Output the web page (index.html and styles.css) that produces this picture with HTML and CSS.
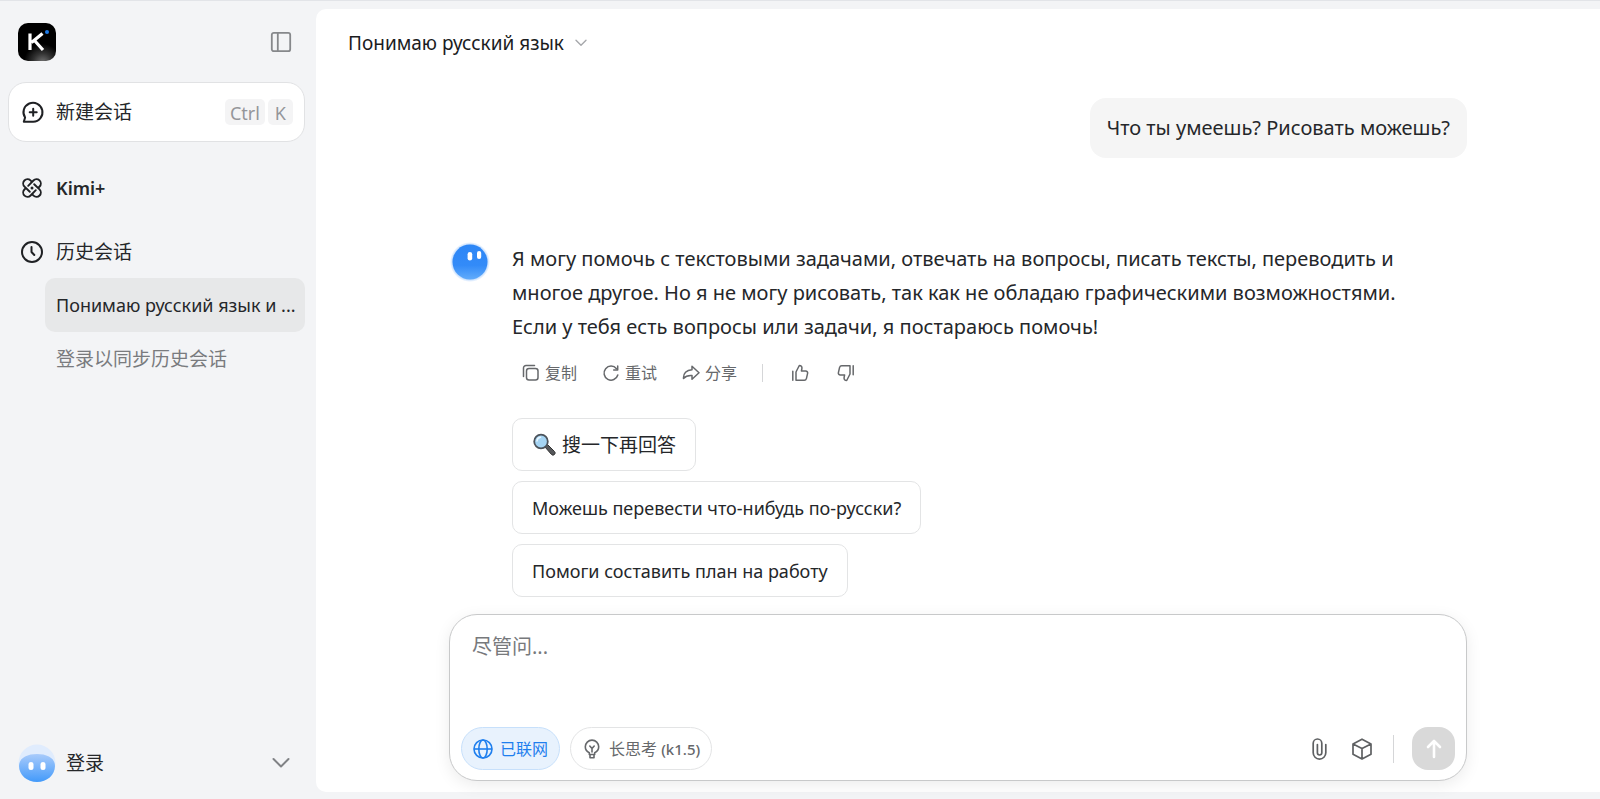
FILE: index.html
```html
<!DOCTYPE html>
<html lang="zh-CN">
<head>
    <meta charset="UTF-8">
    <meta name="viewport" content="width=device-width, initial-scale=1.0">
    <title>Kimi</title>
    <link rel="stylesheet" href="styles.css">
</head>
<body>
    <aside class="sidebar">
        <div class="sidebar-top">
            <a href="#" class="logo" aria-label="Kimi">
                <svg width="38" height="38" viewBox="0 0 38 38">
                    <defs>
                        <radialGradient id="logo-glow" cx="0.65" cy="1.05" r="0.5">
                            <stop offset="0" stop-color="#777"/>
                            <stop offset="0.5" stop-color="#333"/>
                            <stop offset="1" stop-color="#000"/>
                        </radialGradient>
                    </defs>
                    <rect width="38" height="38" rx="10" fill="url(#logo-glow)"/>
                    <path d="M12 10.500v16.500M24.500 10.500L13.500 19.500M16.500 17.500L25 27" fill="none" stroke="#fff" stroke-width="3.200"/>
                    <circle cx="29" cy="9" r="2" fill="#1c7ae8"/>
                </svg>
            </a>
            <button class="icon-button" aria-label="收起侧边栏">
                <svg width="22" height="22" viewBox="0 0 22 22" fill="none" stroke="#86888b" stroke-width="1.800">
                    <rect x="1.800" y="1.800" width="18.400" height="18.400" rx="2"/>
                    <path d="M7.800 2v18"/>
                </svg>
            </button>
        </div>

        <button class="new-chat">
            <svg width="24" height="24" viewBox="0 0 24 24" fill="none" stroke="#1f2124" stroke-width="2" stroke-linecap="round" stroke-linejoin="round">
                <path d="M12.200 21.700H2.800l1.300-4.200A9.500 9.500 0 1 1 12.200 21.700z"/>
                <path d="M12.200 8.700v7M8.700 12.200h7"/>
            </svg>
            <span class="label">新建会话</span>
            <kbd>Ctrl</kbd>
            <kbd>K</kbd>
        </button>

        <nav class="menu">
            <a href="#" class="menu-item kimi-plus">
                <svg width="24" height="24" viewBox="0 0 24 24" fill="none" stroke="#1f2124" stroke-width="1.900" stroke-linecap="round">
                    <path id="loop" d="M8.200 9.800l5.200-5.300a4.300 4.300 0 0 1 6.200 6l-1.200 1.200"/>
                    <use href="#loop" transform="rotate(90 12 12)"/>
                    <use href="#loop" transform="rotate(180 12 12)"/>
                    <use href="#loop" transform="rotate(270 12 12)"/>
                    <circle cx="12" cy="12" r="1.500" fill="#1f2124" stroke="none"/>
                </svg>
                <span>Kimi+</span>
            </a>
            <a href="#" class="menu-item">
                <svg width="24" height="24" viewBox="0 0 24 24" fill="none" stroke="#1f2124" stroke-width="2" stroke-linecap="round" stroke-linejoin="round">
                    <circle cx="12" cy="12" r="10"/>
                    <path d="M11.500 7v5l2.800 3"/>
                </svg>
                <span class="large">历史会话</span>
            </a>
            <a href="#" class="history-item">Понимаю русский язык и ...</a>
            <a href="#" class="sync-hint large">登录以同步历史会话</a>
        </nav>

        <button class="login">
            <svg width="38" height="38" viewBox="0 0 38 38">
                <defs>
                    <linearGradient id="login-face" x1="0" y1="0" x2="0" y2="1">
                        <stop offset="0" stop-color="#a9cbfb"/>
                        <stop offset="1" stop-color="#439afa"/>
                    </linearGradient>
                </defs>
                <circle cx="19" cy="19" r="18.500" fill="#e0ecfd"/>
                <path d="M1 22C1 14 9 10 19 10s18 4 18 12c0 9-8 16-18 16S1 31 1 22z" fill="url(#login-face)"/>
                <rect x="10.500" y="18" width="5" height="8" rx="2.500" fill="#fff"/>
                <rect x="22.500" y="18" width="5" height="8" rx="2.500" fill="#fff"/>
            </svg>
            <span class="label">登录</span>
            <svg width="18" height="12" viewBox="0 0 18 12" fill="none" stroke="#808285" stroke-width="2" stroke-linecap="round" stroke-linejoin="round">
                <path d="M1.500 2L9 9.500L16.500 2"/>
            </svg>
        </button>
    </aside>

    <main class="chat">
        <header class="chat-header">
            <button class="chat-title">
                <span>Понимаю русский язык</span>
                <svg width="12" height="8" viewBox="0 0 12 8" fill="none" stroke="#a6a8ab" stroke-width="1.400" stroke-linecap="round" stroke-linejoin="round">
                    <path d="M1 1.200l5 5l5-5"/>
                </svg>
            </button>
        </header>

        <div class="column">
            <div class="messages">
                <p class="user-message">Что ты умеешь? Рисовать можешь?</p>

                <div class="reply">
                    <svg class="avatar" width="40" height="40" viewBox="0 0 40 40">
                        <defs>
                            <linearGradient id="face" x1="0" y1="0" x2="0" y2="1">
                                <stop offset="0" stop-color="#2c86f6"/>
                                <stop offset="0.6" stop-color="#338bf8"/>
                                <stop offset="1" stop-color="#62acfb"/>
                            </linearGradient>
                            <radialGradient id="halo">
                                <stop offset="0.85" stop-color="#b5d5fd"/>
                                <stop offset="1" stop-color="#fff"/>
                            </radialGradient>
                        </defs>
                        <circle cx="20" cy="20" r="20" fill="url(#halo)"/>
                        <circle cx="20" cy="20" r="17.500" fill="url(#face)"/>
                        <rect x="17.600" y="10" width="4.600" height="8.600" rx="2.300" fill="#fff"/>
                        <rect x="27" y="9" width="4.200" height="8" rx="2.100" fill="#fff"/>
                    </svg>
                    <div class="reply-body">
                        <p class="reply-text">Я могу помочь с текстовыми задачами, отвечать на вопросы, писать тексты, переводить и многое другое. Но я не могу рисовать, так как не обладаю графическими возможностями. Если у тебя есть вопросы или задачи, я постараюсь помочь!</p>

                        <div class="actions">
                            <button>
                                <svg width="18" height="18" viewBox="0 0 18 18">
                                    <rect x="4.500" y="4.500" width="11.500" height="11.500" rx="2.500"/>
                                    <path d="M1.500 12.500V4a2.500 2.500 0 0 1 2.500-2.500h8.500"/>
                                </svg>
                                复制
                            </button>
                            <button>
                                <svg width="18" height="18" viewBox="0 0 18 18">
                                    <path d="M15.800 11a7 7 0 1 1-1.300-6.300"/>
                                    <path d="M15.700 2v4h-4"/>
                                </svg>
                                重试
                            </button>
                            <button>
                                <svg width="18" height="18" viewBox="0 0 18 18">
                                    <path d="M10 2.200l7 6.500l-7 6.500v-3.700c-3.800-.3-6.500.7-8.500 3c-.4-5 3-8.500 8.500-8.800z"/>
                                </svg>
                                分享
                            </button>
                            <span class="divider"></span>
                            <button class="thumb" aria-label="赞">
                                <svg width="18" height="18" viewBox="0 0 18 18">
                                    <path d="M1.800 7.200v9M5 8l3.300-6.500c1.800 0 2.900 1.200 2.600 3l-.5 2.500h4.300c1.300 0 2.200 1.200 1.900 2.400l-1.200 5.200c-.3 1-1.100 1.700-2.100 1.700H5z"/>
                                </svg>
                            </button>
                            <button class="thumb" aria-label="踩">
                                <svg width="18" height="18" viewBox="0 0 18 18">
                                    <path d="M16.200 10.800v-9M13 10l-3.300 6.500c-1.800 0-2.900-1.200-2.600-3l.5-2.500H3.300c-1.300 0-2.200-1.200-1.900-2.400l1.200-5.200c.3-1 1.100-1.700 2.100-1.700H13z"/>
                                </svg>
                            </button>
                        </div>

                        <div class="suggestions">
                            <button class="large">
                                <svg width="24" height="24" viewBox="0 0 24 24">
                                    <path d="M13 14l2.500-2.500l7 7a1.800 1.800 0 0 1-3 3z" fill="#55575a" stroke="#333" stroke-width="1"/>
                                    <circle cx="9" cy="8.500" r="6.800" fill="#a5d4f3" stroke="#4c535b" stroke-width="1.800"/>
                                    <path d="M5 8a4 4 0 0 1 3.500-3.700" fill="none" stroke="#e8f6ff" stroke-width="1.500" stroke-linecap="round"/>
                                </svg>
                                搜一下再回答
                            </button>
                            <button>Можешь перевести что-нибудь по-русски?</button>
                            <button>Помоги составить план на работу</button>
                        </div>
                    </div>
                </div>
            </div>

            <form class="composer">
                <textarea aria-label="尽管问..." placeholder="尽管问..."></textarea>
                <div class="toolbar">
                    <button type="button" class="chip active">
                        <svg width="20" height="20" viewBox="0 0 20 20" fill="none" stroke="currentColor" stroke-width="1.600">
                            <circle cx="10" cy="10" r="9"/>
                            <ellipse cx="10" cy="10" rx="4.200" ry="9"/>
                            <path d="M1 10h18"/>
                        </svg>
                        已联网
                    </button>
                    <button type="button" class="chip">
                        <svg width="20" height="20" viewBox="0 0 20 20" fill="none" stroke="currentColor" stroke-width="1.600" stroke-linecap="round" stroke-linejoin="round">
                            <path d="M7.300 15.500v-1.800C4.800 12.500 3.300 10.500 3.300 7.800a6.700 6.700 0 0 1 13.400 0c0 2.700-1.500 4.700-4 5.900v1.800z"/>
                            <path d="M8 18.800h4v-3M8 18.800v-3M10 13V9.500M7.800 7L10 9.500L12.200 7"/>
                        </svg>
                        <span>长思考 <b>(k1.5)</b></span>
                    </button>
                    <button type="button" class="tool attach" aria-label="附件">
                        <svg width="24" height="24" viewBox="0 0 24 24" fill="none" stroke="#5e6062" stroke-width="1.700" stroke-linecap="round">
                            <path d="M18.800 7.500v8.300a6.300 6.300 0 0 1-12.600 0V6.300a4.300 4.300 0 0 1 8.600 0v9.500a2.200 2.200 0 0 1-4.400 0V7.500"/>
                        </svg>
                    </button>
                    <button type="button" class="tool" aria-label="工具">
                        <svg width="24" height="24" viewBox="0 0 24 24" fill="none" stroke="#5e6062" stroke-width="1.700" stroke-linejoin="round">
                            <path d="M12 2.200l9 4.700v10.300l-9 4.700l-9-4.700V6.900zM3 6.900l9 4.700l9-4.700M12 11.600v10.300"/>
                        </svg>
                    </button>
                    <span class="divider"></span>
                    <button type="submit" class="send" aria-label="发送">
                        <svg width="20" height="20" viewBox="0 0 20 20" fill="none" stroke="#fff" stroke-width="2.600" stroke-linecap="round" stroke-linejoin="round">
                            <path d="M10 18V2M4 8l6-6l6 6"/>
                        </svg>
                    </button>
                </div>
            </form>
        </div>
    </main>
</body>
</html>
```
FILE: styles.css
```css
* {
    box-sizing: border-box;
}
body {
    margin: 0;
    min-height: 100vh;
    display: flex;
    padding: 8px 0 7px;
    border-top: 1px solid #e2e4e8;
    background-color: #f3f4f6;
    color: #25272a;
    font-family: "Noto Sans", "Noto Sans CJK SC", sans-serif;
    font-size: 18px;
    line-height: 24px;
}
button {
    display: flex;
    align-items: center;
    padding: 0;
    border: none;
    background: none;
    color: inherit;
    font: inherit;
    cursor: pointer;
}
a {
    color: inherit;
    text-decoration: none;
}
svg {
    display: block;
    flex: none;
}
p {
    margin: 0;
}
.large,
.label {
    font-size: 19px;
}

/* sidebar */
.sidebar {
    flex: none;
    width: 316px;
    padding: 14px 11px 10px 8px;
    display: flex;
    flex-direction: column;
}
.sidebar-top {
    display: flex;
    align-items: center;
    justify-content: space-between;
    padding: 0 13px 0 10px;
}
.new-chat {
    height: 60px;
    margin-top: 21px;
    padding: 0 11px 0 12px;
    gap: 3px;
    border: 1px solid #e1e2e4;
    border-radius: 18px;
    background-color: #fff;
}
.label {
    flex: 1;
    text-align: left;
}
.new-chat .label {
    margin-left: 8px;
}
kbd {
    height: 26px;
    padding: 0 5px;
    border-radius: 5px;
    background-color: #f4f4f5;
    color: #94969a;
    font-family: inherit;
    line-height: 28px;
}
kbd:last-child {
    padding: 0 7px;
}
.menu {
    margin-top: 14px;
    display: flex;
    flex-direction: column;
}
.menu-item {
    height: 64px;
    padding-left: 12px;
    display: flex;
    align-items: center;
    gap: 12px;
}
.kimi-plus {
    font-weight: 600;
}
.history-item {
    height: 54px;
    margin: -6px 0 0 37px;
    padding: 0 11px;
    border-radius: 10px;
    background-color: #e7e8e9;
    line-height: 54px;
    white-space: nowrap;
    overflow: hidden;
}
.sync-hint {
    padding: 15px 0 0 48px;
    color: #797b7e;
}
.login {
    margin-top: auto;
    padding: 0 15px 0 10px;
    gap: 10px;
}

/* chat panel */
.chat {
    flex: 1;
    min-width: 0;
    display: flex;
    flex-direction: column;
    border-radius: 10px 0 0 10px;
    background-color: #fff;
}
.chat-header {
    height: 68px;
    padding-left: 32px;
    display: flex;
    align-items: center;
}
.chat-title {
    gap: 11px;
    color: #1b1c1e;
    font-size: 19px;
}
.column {
    flex: 1;
    width: 100%;
    max-width: 1018px;
    margin: 0 auto;
    padding-bottom: 11px;
    display: flex;
    flex-direction: column;
    justify-content: space-between;
}
.messages {
    padding-top: 21px;
}
.user-message {
    width: fit-content;
    margin-left: auto;
    padding: 13px 17px;
    border-radius: 16px;
    background-color: #f5f5f5;
    font-size: 20px;
    line-height: 34px;
}
.reply {
    margin-top: 84px;
    display: flex;
    align-items: flex-start;
    gap: 22px;
}
.avatar {
    margin-left: 1px;
}
.reply-body {
    flex: 1;
    max-width: 900px;
}
.reply-text {
    font-size: 20px;
    line-height: 34px;
}
.actions {
    height: 38px;
    margin-top: 10px;
    padding-left: 10px;
    display: flex;
    align-items: center;
    gap: 25px;
    color: #66686b;
    font-size: 16px;
}
.actions button {
    gap: 5px;
}
.actions svg {
    fill: none;
    stroke: currentColor;
    stroke-width: 1.5;
    stroke-linecap: round;
    stroke-linejoin: round;
}
.actions .thumb {
    margin-left: 3px;
}
.divider {
    width: 1px;
    height: 18px;
    background-color: #d5d6d8;
}
.suggestions {
    margin-top: 26px;
    display: flex;
    flex-direction: column;
    align-items: flex-start;
    gap: 10px;
}
.suggestions button {
    height: 53px;
    padding: 0 19px;
    gap: 6px;
    border: 1px solid #e3e4e5;
    border-radius: 10px;
}

/* input box */
.composer {
    height: 167px;
    padding: 18px 11px 10px;
    display: flex;
    flex-direction: column;
    border: 1px solid #c8c9ca;
    border-radius: 28px;
    background-color: #fff;
    box-shadow: 0 4px 16px rgba(0, 0, 0, 0.08);
}
textarea {
    flex: 1;
    padding: 0 11px;
    border: none;
    outline: none;
    resize: none;
    font: inherit;
    font-size: 20px;
    line-height: 28px;
}
textarea::placeholder {
    color: #77797c;
}
.toolbar {
    display: flex;
    align-items: center;
}
.chip {
    height: 43px;
    margin-right: 10px;
    padding: 0 11px;
    gap: 7px;
    border: 1px solid #e3e4e5;
    border-radius: 22px;
    color: #66686b;
    font-size: 16px;
}
.chip b {
    font-weight: 500;
    font-size: 15px;
}
.chip.active {
    border-color: #c7e0fb;
    background-color: #e8f2fd;
    color: #1f7fee;
}
.tool {
    margin-right: 19px;
}
.attach {
    margin-left: auto;
}
.toolbar .divider {
    height: 28px;
    margin-right: 18px;
}
.send {
    width: 43px;
    height: 43px;
    justify-content: center;
    border-radius: 16px;
    background-color: #d9d9d9;
}
```
